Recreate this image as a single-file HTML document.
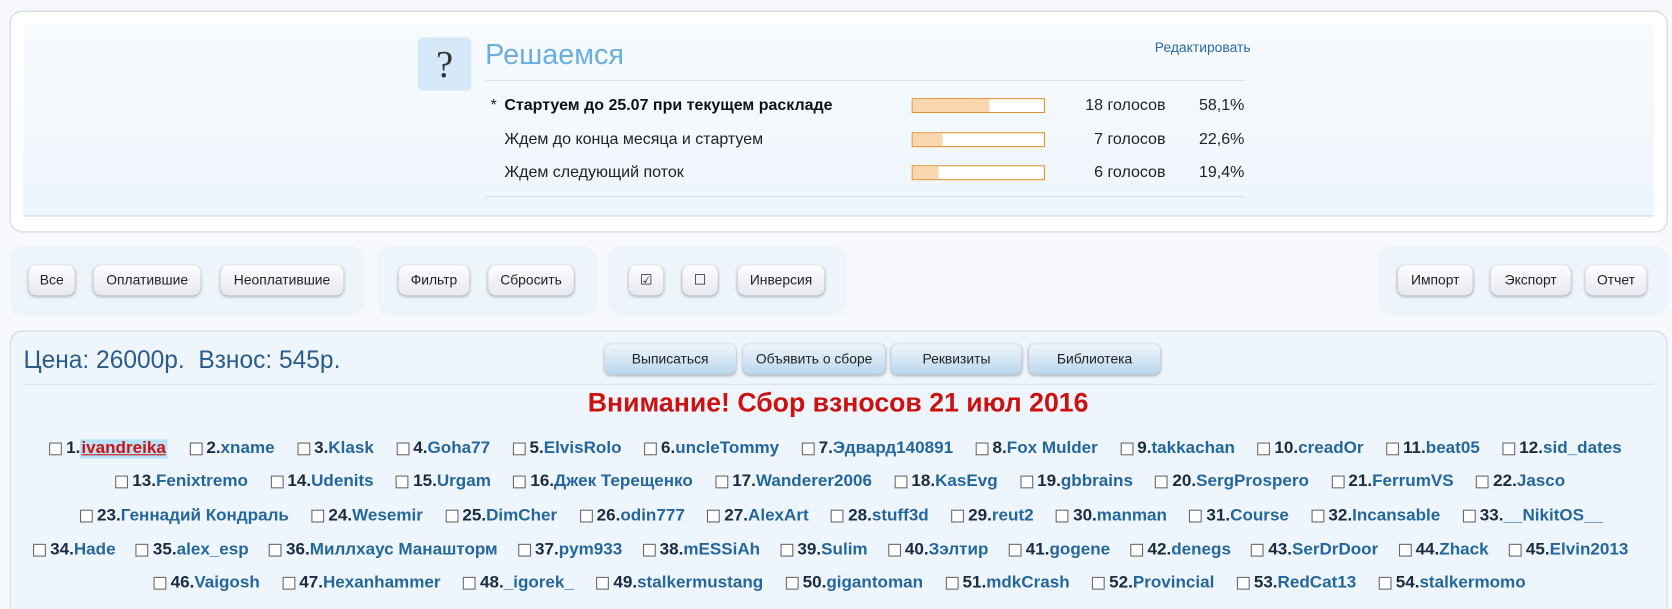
<!DOCTYPE html>
<html style="overflow:hidden;height:609px"><head><meta charset="utf-8"><style>
*{box-sizing:border-box;margin:0;padding:0}
body{width:1672px;height:609px;overflow:hidden;background:#f8f9fd;font-family:"Liberation Sans",Arial,sans-serif;position:relative}
#w{position:absolute;left:0;top:0;width:1568px;height:571px;overflow:hidden;transform:scale(1.0663);transform-origin:0 0}
.a{position:absolute}
.box{position:absolute;border:1px solid #cdd6e2;border-radius:12px;background:#fff}
.pan{position:absolute;background:#eef4fb;border-radius:12px}
.btn{position:absolute;top:249px;height:28px;border-radius:7px;background:linear-gradient(#fdfdff,#e8e8f0);box-shadow:0 1px 3px rgba(0,0,0,.35);font-size:13px;color:#222;text-align:center;line-height:28px}
.b2{position:absolute;top:323px;height:28px;border-radius:6px;background:linear-gradient(#f0f6fc,#b9d6ec);box-shadow:0 1px 3px rgba(0,0,0,.35);font-size:13px;color:#222;text-align:center;line-height:28px}
.row{position:absolute;display:flex;gap:21px;font-size:16px;font-weight:bold;height:20px;align-items:center;white-space:nowrap}
.row span{display:flex;align-items:center}
.row i{display:inline-block;width:12px;height:12px;border:1px solid #666;background:#fff;margin-right:4px}
.row b{color:#1b2c3e}
.row u{text-decoration:none;color:#24679c}
.pr{position:absolute;font-size:15px;color:#222}
.bar{position:absolute;left:855px;width:125px;height:14px;border:1px solid #e0922e;background:#fff}
.bar div{height:12px;background:#fad7ae}
</style></head><body><div id="w">
<div class="box" style="left:9px;top:10px;width:1555px;height:208px"></div>
<div class="a" style="left:22px;top:22px;width:1529px;height:181px;background:linear-gradient(#f7fbfe,#eef5fb);border-bottom:1px solid #c9d4df"></div>
<div class="a" style="left:392px;top:35px;width:50px;height:50px;background:#d6e9f8;border-radius:5px;font-family:'Liberation Serif',serif;font-size:36px;color:#333;text-align:center;line-height:50px">?</div>
<div class="a" style="left:455px;top:36px;font-size:27px;color:#6aaee0">Решаемся</div>
<div class="a" style="left:1083px;top:37px;font-size:13px;color:#2a6aa5">Редактировать</div>
<div class="a" style="left:455px;top:75px;width:712px;height:1px;background:#d4e4f2"></div>
<div class="a" style="left:455px;top:184px;width:712px;height:1px;background:#d4e4f2"></div>
<div class="pr" style="left:460px;top:90px">*</div>
<div class="pr" style="left:473px;top:90px;font-weight:bold;color:#111">Стартуем до 25.07 при текущем раскладе</div>
<div class="pr" style="left:473px;top:122px">Ждем до конца месяца и стартуем</div>
<div class="pr" style="left:473px;top:153px">Ждем следующий поток</div>
<div class="bar" style="top:92px"><div style="width:72px"></div></div>
<div class="bar" style="top:124px"><div style="width:28px"></div></div>
<div class="bar" style="top:155px"><div style="width:24px"></div></div>
<div class="pr" style="left:973px;top:90px;width:120px;text-align:right">18 голосов</div>
<div class="pr" style="left:973px;top:122px;width:120px;text-align:right">7 голосов</div>
<div class="pr" style="left:973px;top:153px;width:120px;text-align:right">6 голосов</div>
<div class="pr" style="left:1090px;top:90px;width:77px;text-align:right">58,1%</div>
<div class="pr" style="left:1090px;top:122px;width:77px;text-align:right">22,6%</div>
<div class="pr" style="left:1090px;top:153px;width:77px;text-align:right">19,4%</div>

<div class="pan" style="left:9px;top:231px;width:333px;height:65px"></div>
<div class="pan" style="left:354px;top:231px;width:206px;height:65px"></div>
<div class="pan" style="left:570px;top:231px;width:224px;height:65px"></div>
<div class="pan" style="left:1292px;top:231px;width:272px;height:65px"></div>
<div class="btn" style="left:27px;width:43px">Все</div>
<div class="btn" style="left:88px;width:100px">Оплатившие</div>
<div class="btn" style="left:207px;width:115px">Неоплатившие</div>
<div class="btn" style="left:374px;width:66px">Фильтр</div>
<div class="btn" style="left:458px;width:80px">Сбросить</div>
<div class="btn" style="left:590px;width:32px">☑</div>
<div class="btn" style="left:640px;width:33px">☐</div>
<div class="btn" style="left:692px;width:81px">Инверсия</div>
<div class="btn" style="left:1311px;width:70px">Импорт</div>
<div class="btn" style="left:1398px;width:75px">Экспорт</div>
<div class="btn" style="left:1487px;width:57px">Отчет</div>

<div class="box" style="left:9px;top:310px;width:1555px;height:261px;background:#eef5fc;border-bottom:none;border-radius:12px 12px 0 0"></div>
<div class="a" style="left:22px;top:324px;font-size:23px;color:#2a5c8a">Цена: 26000р.&nbsp; Взнос: 545р.</div>
<div class="b2" style="left:567px;width:123px">Выписаться</div>
<div class="b2" style="left:697px;width:133px">Объявить о сборе</div>
<div class="b2" style="left:836px;width:122px">Реквизиты</div>
<div class="b2" style="left:965px;width:123px">Библиотека</div>
<div class="a" style="left:22px;top:360px;width:1529px;height:1px;background:#d4e4f2"></div>
<div class="a" style="left:0;width:1572px;top:364px;text-align:center;font-size:25px;font-weight:bold;color:#cc1111">Внимание! Сбор взносов 21 июл 2016</div>

<div class="row" style="top:411px;left:46px"><span><i></i><b>1.</b><u style="color:#cc1111;text-decoration:underline;background:#b8e2f8;padding:0 1px">ivandreika</u></span><span><i></i><b>2.</b><u>xname</u></span><span><i></i><b>3.</b><u>Klask</u></span><span><i></i><b>4.</b><u>Goha77</u></span><span><i></i><b>5.</b><u>ElvisRolo</u></span><span><i></i><b>6.</b><u>uncleTommy</u></span><span><i></i><b>7.</b><u>Эдвард140891</u></span><span><i></i><b>8.</b><u>Fox Mulder</u></span><span><i></i><b>9.</b><u>takkachan</u></span><span><i></i><b>10.</b><u>creadOr</u></span><span><i></i><b>11.</b><u>beat05</u></span><span><i></i><b>12.</b><u>sid_dates</u></span></div>
<div class="row" style="top:442px;left:108px"><span><i></i><b>13.</b><u>Fenixtremo</u></span><span><i></i><b>14.</b><u>Udenits</u></span><span><i></i><b>15.</b><u>Urgam</u></span><span><i></i><b>16.</b><u>Джек Терещенко</u></span><span><i></i><b>17.</b><u>Wanderer2006</u></span><span><i></i><b>18.</b><u>KasEvg</u></span><span><i></i><b>19.</b><u>gbbrains</u></span><span><i></i><b>20.</b><u>SergProspero</u></span><span><i></i><b>21.</b><u>FerrumVS</u></span><span><i></i><b>22.</b><u>Jasco</u></span></div>
<div class="row" style="top:474px;left:75px"><span><i></i><b>23.</b><u>Геннадий Кондраль</u></span><span><i></i><b>24.</b><u>Wesemir</u></span><span><i></i><b>25.</b><u>DimCher</u></span><span><i></i><b>26.</b><u>odin777</u></span><span><i></i><b>27.</b><u>AlexArt</u></span><span><i></i><b>28.</b><u>stuff3d</u></span><span><i></i><b>29.</b><u>reut2</u></span><span><i></i><b>30.</b><u>manman</u></span><span><i></i><b>31.</b><u>Course</u></span><span><i></i><b>32.</b><u>Incansable</u></span><span><i></i><b>33.</b><u>__NikitOS__</u></span></div>
<div class="row" style="top:506px;left:31px;gap:19px"><span><i></i><b>34.</b><u>Hade</u></span><span><i></i><b>35.</b><u>alex_esp</u></span><span><i></i><b>36.</b><u>Миллхаус Манашторм</u></span><span><i></i><b>37.</b><u>pym933</u></span><span><i></i><b>38.</b><u>mESSiAh</u></span><span><i></i><b>39.</b><u>Sulim</u></span><span><i></i><b>40.</b><u>Зэлтир</u></span><span><i></i><b>41.</b><u>gogene</u></span><span><i></i><b>42.</b><u>denegs</u></span><span><i></i><b>43.</b><u>SerDrDoor</u></span><span><i></i><b>44.</b><u>Zhack</u></span><span><i></i><b>45.</b><u>Elvin2013</u></span></div>
<div class="row" style="top:537px;left:144px"><span><i></i><b>46.</b><u>Vaigosh</u></span><span><i></i><b>47.</b><u>Hexanhammer</u></span><span><i></i><b>48.</b><u>_igorek_</u></span><span><i></i><b>49.</b><u>stalkermustang</u></span><span><i></i><b>50.</b><u>gigantoman</u></span><span><i></i><b>51.</b><u>mdkCrash</u></span><span><i></i><b>52.</b><u>Provincial</u></span><span><i></i><b>53.</b><u>RedCat13</u></span><span><i></i><b>54.</b><u>stalkermomo</u></span></div>
</div></body></html>
